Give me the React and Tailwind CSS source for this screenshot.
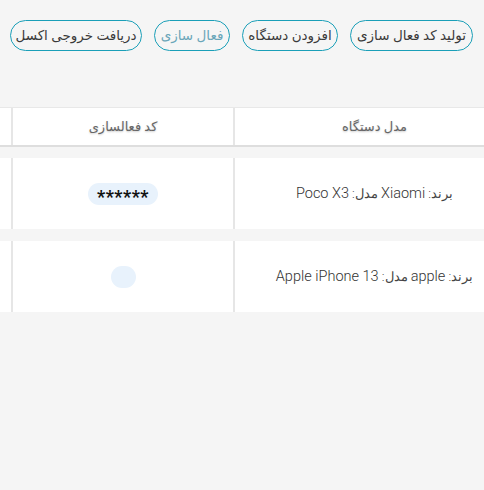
import React from 'react'

// ── Toolbar buttons (right to left) ───────────────────────────────────────────
const ACTIONS = [
  { label: 'تولید کد فعال سازی', w: 'w-[123px]' },
  { label: 'افزودن دستگاه', w: 'w-[96px]' },
  { label: 'فعال سازی', w: 'w-[76px]', muted: true },
  { label: 'دریافت خروجی اکسل', w: 'w-[132px]' },
]

const DEVICES = [
  { brand: 'Xiaomi', model: 'Poco X3', code: '******' },
  { brand: 'apple', model: 'Apple iPhone 13', code: '' },
]

const FONT = "font-['Roboto','DejaVu_Sans',sans-serif]"

function Row({ children, className }) {
  return <div className={'flex flex-row bg-white ' + className}>{children}</div>
}

export default function App() {
  return (
    <div dir="rtl" className={'w-[484px] h-[490px] overflow-hidden bg-[#f5f5f5] ' + FONT}>
      {/* toolbar */}
      <div className="flex flex-row gap-[12px] pr-[11px] pt-[20px]">
        {ACTIONS.map(a => (
          <button
            key={a.label}
            className={
              'h-[31px] shrink-0 rounded-full border-[1.5px] border-[#1a9fb8] text-[13.5px] leading-none ' +
              a.w + (a.muted ? ' text-[#6aa6b9]' : ' text-[#3a3a3a]')
            }
          >
            {a.label}
          </button>
        ))}
      </div>

      {/* table */}
      <div className="mt-[56px] flex flex-col">
        <Row className="h-[40px] border-t border-t-[#e8e8e8] border-b-[2.5px] border-b-[#dedede]">
          <div className="w-[249px] shrink-0 flex items-center justify-center pl-[30px] text-[13px] text-[#666] [text-shadow:0_1px_2px_rgba(0,0,0,0.2)]">
            مدل دستگاه
          </div>
          <div className="w-[222px] shrink-0 border-r-2 border-r-[#e6e6e6] flex items-center justify-center text-[13px] text-[#666] [text-shadow:0_1px_2px_rgba(0,0,0,0.2)]">
            کد فعالسازی
          </div>
          <div className="w-[13px] shrink-0 border-r-2 border-r-[#e6e6e6]" />
        </Row>

        {DEVICES.map((d, i) => (
          <Row key={i} className={i === 0 ? 'mt-[11px] h-[71px]' : 'mt-[12px] h-[71px]'}>
            <div className="w-[249px] shrink-0 flex items-center justify-center pl-[30px] text-[14.5px] text-[#333] font-light">
              <span>
                <span className="text-[13px] text-[#444]">برند: </span>{d.brand}<span className="text-[13px] text-[#444]"> مدل: </span>{d.model}
              </span>
            </div>
            <div className="w-[222px] shrink-0 border-r-2 border-r-[#e6e6e6] flex items-center justify-center">
              <span className="h-[22px] min-w-[25px] px-[9px] rounded-full bg-[#e8f2fc] flex items-center justify-center text-[18px] font-bold text-[#111] tracking-[0.5px] pt-[6px]">
                {d.code}
              </span>
            </div>
            <div className="w-[13px] shrink-0 border-r-2 border-r-[#e6e6e6]" />
          </Row>
        ))}
      </div>
    </div>
  )
}
